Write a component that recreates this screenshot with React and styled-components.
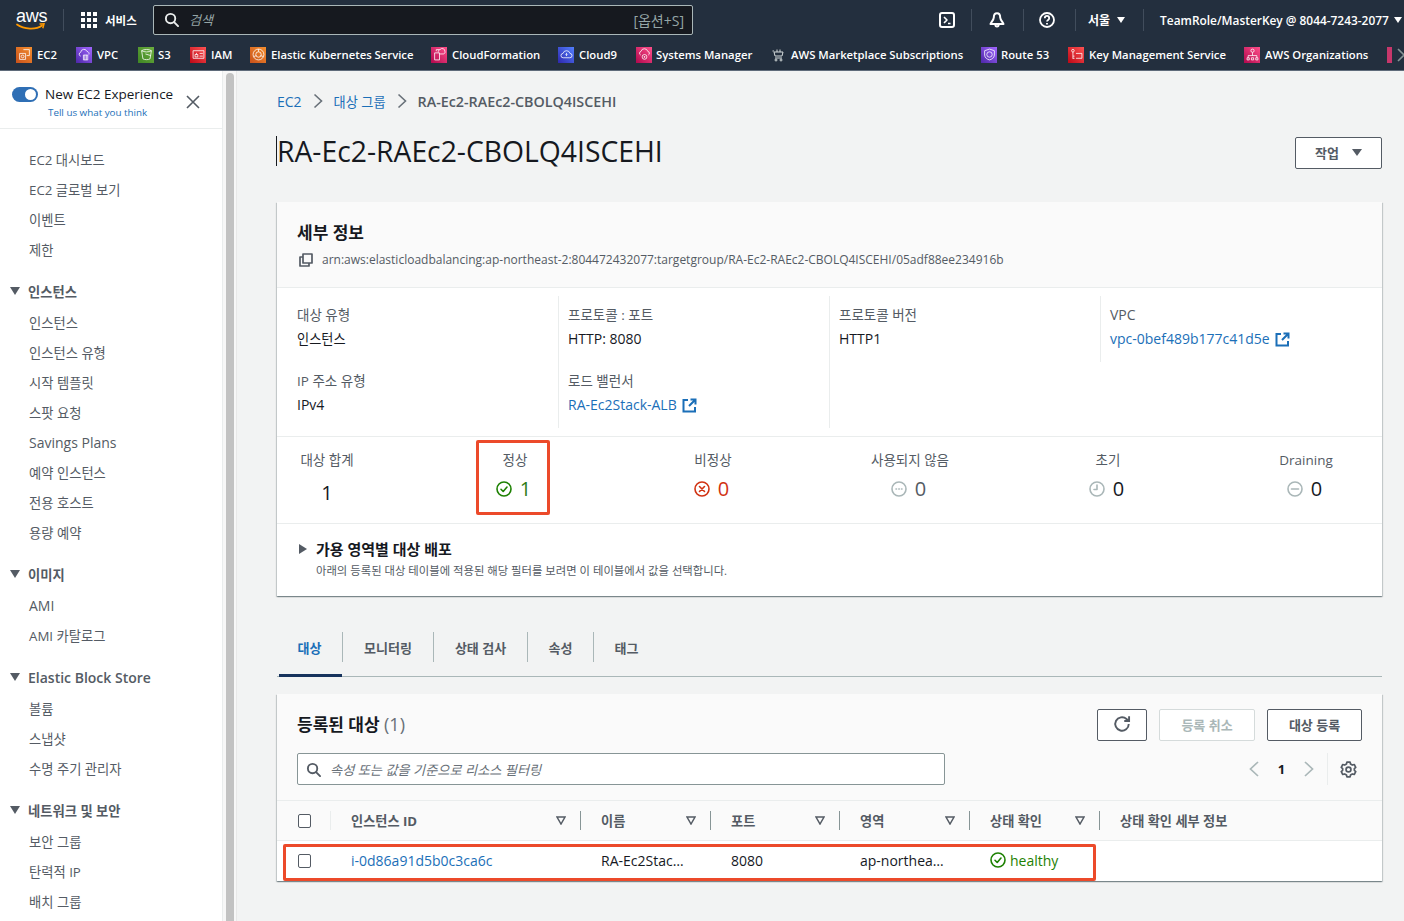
import React from "react";
import styled, { createGlobalStyle } from "styled-components";

const LINK = "#1b6fb8";

const GlobalStyle = createGlobalStyle`
  html, body {
    margin: 0;
    height: 921px;
    overflow: hidden;
    background: #f2f3f3;
    font-family: "Open Sans", "Noto Sans CJK KR", sans-serif;
    color: #16191f;
  }
  * { box-sizing: border-box; }
`;

const Page = styled.div`
  position: relative;
  width: 1404px;
  height: 921px;
  overflow: hidden;
`;

/* top navigation */
const TopBar = styled.div`
  display: flex;
  align-items: center;
  height: 39px;
  background: #232f3e;
  color: #fff;
`;
const LogoBox = styled.div`
  position: relative;
  width: 30px;
  height: 28px;
  margin-left: 16px;
  flex: none;
`;
const LogoText = styled.span`
  display: block;
  font-family: "Liberation Sans", sans-serif;
  font-size: 18px;
  line-height: 18px;
  letter-spacing: -0.3px;
  color: #fff;
  margin-top: 1px;
`;
const Smile = styled.svg`
  position: absolute;
  left: 0;
  top: 17px;
`;
const NavSep = styled.div`
  width: 1px;
  height: 22px;
  background: #414d5c;
  flex: none;
  margin: ${(p) => p.$margin || "0"};
`;
const ServicesLabel = styled.span`
  font-size: 11.5px;
  font-weight: 600;
  margin: 0 17px 0 8px;
  width: 31px;
  white-space: nowrap;
`;
const SearchBox = styled.div`
  display: flex;
  align-items: center;
  width: 540px;
  height: 30px;
  background: #16191f;
  border: 1px solid #aab7b8;
  border-radius: 2px;
  padding: 0 8px 0 10px;
  flex: none;
`;
const SearchHint = styled.span`
  font-size: 13px;
  font-style: italic;
  color: #95a5a6;
  margin-left: 10px;
  flex: 1;
`;
const SearchKey = styled.span`
  font-size: 14px;
  color: #95a5a6;
`;
const TopIcon = styled.div`
  display: flex;
  width: 16px;
  margin-left: ${(p) => p.$left || 0}px;
  flex: none;
`;
const Region = styled.span`
  margin-left: 12px;
  font-size: 12px;
  font-weight: 600;
  white-space: nowrap;
`;
const Account = styled.span`
  margin-left: 16px;
  font-size: 11.9px;
  font-weight: 600;
  white-space: nowrap;
`;
const Caret = styled.span`
  width: 0;
  height: 0;
  flex: none;
  border-left: ${(p) => p.$size || 4}px solid transparent;
  border-right: ${(p) => p.$size || 4}px solid transparent;
  border-top: ${(p) => (p.$size || 4) + 2}px solid ${(p) => p.$color || "#fff"};
  margin-left: ${(p) => p.$left || 0}px;
`;

const FavBar = styled.div`
  display: flex;
  align-items: center;
  height: 32px;
  background: #232f3e;
  border-bottom: 1px solid #5f6b7a;
  padding-left: 16px;
  color: #fff;
  overflow: hidden;
  white-space: nowrap;
`;
const FavItem = styled.div`
  display: flex;
  align-items: center;
  flex: none;
  gap: ${(p) => p.$gap || 5}px;
  width: ${(p) => p.$width}px;
  font-size: 11.3px;
  font-weight: 600;
`;
const FavIconBox = styled.span`
  display: flex;
  align-items: center;
  justify-content: center;
  width: 16px;
  height: 16px;
  flex: none;
  background: ${(p) => p.$bg};
`;
const FavEnd = styled.div`
  width: 5px;
  height: 16px;
  background: #c7376b;
  flex: none;
`;
const FavChevron = styled.svg`
  margin-left: 5px;
  flex: none;
`;

const Body = styled.div`
  display: flex;
  height: 850px;
`;

/* left navigation */
const Side = styled.aside`
  width: 223px;
  height: 100%;
  background: #fff;
  flex: none;
  border-right: 1px solid #eaeded;
`;
const Experience = styled.div`
  position: relative;
  height: 58px;
  border-bottom: 1px solid #eaeded;
`;
const ExperienceRow = styled.div`
  display: flex;
  align-items: center;
  padding: 14px 0 0 12px;
  font-size: 13.5px;
  line-height: 19px;
`;
const Toggle = styled.span`
  position: relative;
  display: block;
  width: 26px;
  height: 15px;
  border-radius: 8px;
  background: #2f6fb5;
  margin-right: 7px;
  flex: none;
  &::after {
    content: "";
    position: absolute;
    right: 2px;
    top: 2px;
    width: 11px;
    height: 11px;
    border-radius: 50%;
    background: #fff;
  }
`;
const ExperienceLink = styled.div`
  font-size: 9.8px;
  line-height: 14px;
  color: ${LINK};
  padding-left: 48px;
  margin-top: 2px;
`;
const CloseIcon = styled.svg`
  position: absolute;
  left: 186px;
  top: 24px;
`;
const SideNav = styled.nav`
  padding-top: 15px;
`;
const NavGroupTitle = styled.div`
  display: flex;
  align-items: center;
  height: 30px;
  margin-top: 12px;
  margin-bottom: 1px;
  padding-left: 10px;
  font-size: ${(p) => (p.$ko ? 13.3 : 14)}px;
  font-weight: 600;
  color: #545b64;
`;
const NavCaret = styled.span`
  width: 0;
  height: 0;
  border-left: 5px solid transparent;
  border-right: 5px solid transparent;
  border-top: 8px solid #545b64;
  margin-right: 8px;
`;
const NavItem = styled.div`
  display: flex;
  align-items: center;
  height: 30px;
  padding-left: 29px;
  font-size: ${(p) => (p.$ko ? 13.3 : 14)}px;
  color: #545b64;
`;

const ScrollTrack = styled.div`
  width: 14px;
  flex: none;
  background: #f7f7f7;
  border-right: 1px solid #e8e8e8;
  padding: 2px 2px 0 3px;
`;
const ScrollThumb = styled.div`
  height: 100%;
  border-radius: 5px 5px 0 0;
  background: #c2c2c2;
`;

/* main content */
const Main = styled.main`
  flex: 1;
  padding: 0 22px 0 40px;
  min-width: 0;
`;
const Crumbs = styled.div`
  display: flex;
  align-items: center;
  height: 20px;
  margin-top: 20px;
  font-size: 14px;
`;
const CrumbLink = styled.span`
  color: ${LINK};
  font-size: ${(p) => p.$size || 14}px;
`;
const CrumbCurrent = styled.span`
  color: #545b64;
  font-weight: 600;
  font-size: 14.3px;
`;
const CrumbSep = styled.svg`
  margin: 0 11px;
`;
const TitleRow = styled.div`
  display: flex;
  align-items: center;
  justify-content: space-between;
  margin-top: 18px;
  height: 48px;
`;
const PageTitle = styled.h1`
  margin: 0 0 4px -1px;
  border-left: 1px solid #16191f;
  height: 30px;
  display: flex;
  align-items: center;
  font-size: 28.3px;
  font-weight: 400;
  line-height: 30px;
  color: #16191f;
`;
const Button = styled.button`
  display: flex;
  align-items: center;
  justify-content: center;
  gap: ${(p) => p.$gap || 0}px;
  width: ${(p) => p.$width}px;
  height: 32px;
  flex: none;
  padding: 0 0 2px;
  background: #fff;
  border: 1px solid ${(p) => (p.$off ? "#d5dbdb" : "#545b64")};
  border-radius: 2px;
  color: ${(p) => (p.$off ? "#aab7b8" : "#545b64")};
  font-family: inherit;
  font-size: 13px;
  font-weight: 600;
`;

const Card = styled.section`
  background: #fff;
  box-shadow: 0 1px 1px 0 rgba(0, 28, 36, 0.3), 1px 1px 1px 0 rgba(0, 28, 36, 0.15), -1px 1px 1px 0 rgba(0, 28, 36, 0.15);
`;
const DetailsCard = styled(Card)`
  margin-top: 25px;
  height: 394px;
`;
const DetailsHead = styled.div`
  height: 86px;
  padding: 20px 20px 0;
  border-bottom: 1px solid #eaeded;
  background: #fafafa;
`;
const CardTitle = styled.h2`
  margin: 0;
  font-size: 17px;
  line-height: 22px;
  font-weight: 700;
`;
const ArnRow = styled.div`
  display: flex;
  align-items: center;
  gap: 9px;
  margin-top: 8px;
  padding-left: 2px;
  font-size: 12px;
  line-height: 16px;
  color: #545b64;
  white-space: nowrap;
`;
const AttrGrid = styled.div`
  display: grid;
  grid-template-columns: repeat(4, 271px);
  height: 149px;
  padding: 8px 0 9px 10px;
  border-bottom: 1px solid #eaeded;
`;
const AttrCol = styled.div`
  border-left: ${(p) => (p.$rule ? "1px solid #eaeded" : "0")};
  padding-left: ${(p) => (p.$rule ? 9 : 0)}px;
`;
const AttrBlock = styled.div`
  height: 66px;
  padding-top: 9px;
  padding-left: ${(p) => (p.$rule ? 9 : p.$flush ? 0 : 10)}px;
  border-left: ${(p) => (p.$rule ? "1px solid #eaeded" : "0")};
`;
const AttrLabel = styled.div`
  font-size: ${(p) => p.$size || 13.5}px;
  line-height: 20px;
  color: #545b64;
`;
const AttrValue = styled.div`
  display: flex;
  align-items: center;
  gap: 5px;
  margin-top: 4px;
  font-size: ${(p) => (p.$ko ? 13.2 : 14)}px;
  line-height: 20px;
  color: ${(p) => (p.$link ? LINK : "#16191f")};
`;
const Stats = styled.div`
  display: flex;
  height: 87px;
  border-bottom: 1px solid #eaeded;
`;
const Stat = styled.div`
  display: flex;
  flex-direction: column;
  align-items: center;
  width: ${(p) => p.$width}px;
  margin-left: ${(p) => p.$left}px;
  padding-top: 13px;
  flex: none;
`;
const StatLabel = styled.div`
  font-size: 13.5px;
  line-height: 20px;
  color: #545b64;
  white-space: nowrap;
`;
const StatValue = styled.div`
  display: flex;
  align-items: center;
  gap: 8px;
  margin-top: ${(p) => p.$top ?? 6}px;
  margin-right: ${(p) => (p.$top ? 0 : 3)}px;
  font-size: 20px;
  line-height: 26px;
  color: ${(p) => p.$color || "#16191f"};
`;
const Distribution = styled.div`
  padding: 13px 0 0 22px;
`;
const DistTitle = styled.div`
  display: flex;
  align-items: center;
  gap: 9px;
  font-size: 15px;
  font-weight: 700;
  line-height: 24px;
`;
const DistCaret = styled.span`
  width: 0;
  height: 0;
  border-top: 5px solid transparent;
  border-bottom: 5px solid transparent;
  border-left: 8px solid #545b64;
`;
const DistHint = styled.div`
  font-size: 11.35px;
  line-height: 16px;
  color: #545b64;
  padding-left: 17px;
  margin-top: 2px;
`;

const Tabs = styled.div`
  display: flex;
  align-items: flex-start;
  height: 48px;
  margin-top: 33px;
  padding-top: 3px;
  border-bottom: 1px solid #aab7b8;
`;
const Tab = styled.div`
  position: relative;
  display: flex;
  align-items: center;
  justify-content: center;
  height: 30px;
  width: ${(p) => p.$width}px;
  flex: none;
  font-size: 13px;
  font-weight: 600;
  color: ${(p) => (p.$active ? LINK : "#545b64")};
  border-right: 1px solid ${(p) => (p.$end ? "transparent" : "#aab7b8")};
  ${(p) => p.$active && `
    &::after {
      content: "";
      position: absolute;
      left: 2px;
      right: 0;
      bottom: -15px;
      height: 3px;
      background: #16325c;
    }
  `}
`;

const TableCard = styled(Card)`
  margin-top: 17px;
  height: 187px;
`;
const TableHead = styled.div`
  height: 107px;
  padding: 15px 20px 0;
  background: #fafafa;
  border-bottom: 1px solid #eaeded;
`;
const TableTitleRow = styled.div`
  display: flex;
  align-items: center;
  height: 32px;
`;
const TableTitle = styled.h2`
  margin: 0 0 4px;
  flex: 1;
  font-size: 17px;
  font-weight: 700;
`;
const TableCount = styled.span`
  font-weight: 400;
  font-size: 18px;
  color: #687078;
`;
const ButtonGroup = styled.div`
  display: flex;
  gap: 12px;
`;
const FilterRow = styled.div`
  display: flex;
  align-items: center;
  margin-top: 12px;
  height: 32px;
`;
const FilterBox = styled.div`
  display: flex;
  align-items: center;
  gap: 9px;
  width: 648px;
  height: 32px;
  padding-left: 8px;
  background: #fff;
  border: 1px solid #879596;
  border-radius: 2px;
  font-size: 13.2px;
  font-style: italic;
  color: #687078;
`;
const Pager = styled.div`
  display: flex;
  align-items: center;
  margin-left: auto;
  padding-right: 5px;
`;
const PageNumber = styled.span`
  width: 43px;
  text-align: center;
  font-size: 13px;
  font-weight: 700;
`;
const PagerSep = styled.div`
  width: 1px;
  height: 32px;
  background: #eaeded;
  margin: 0 12px;
`;

const Row = styled.div`
  display: grid;
  grid-template-columns: 54px 250px 130px 129px 130px 130px 1fr;
  align-items: center;
  height: ${(p) => p.$height}px;
  background: ${(p) => p.$bg || "#fff"};
  border-bottom: ${(p) => (p.$line ? "1px solid #eaeded" : "0")};
`;
const CheckCell = styled.div`
  display: flex;
  align-items: center;
  height: 19px;
  padding-left: 21px;
  border-right: 1px solid ${(p) => p.$sep || "transparent"};
`;
const CheckBox = styled.span`
  display: block;
  width: 13px;
  height: 14px;
  background: #fff;
  border: 1px solid #545b64;
  border-radius: 2px;
`;
const HeadCell = styled.div`
  display: flex;
  align-items: center;
  justify-content: space-between;
  height: 19px;
  padding: 0 14px 0 20px;
  font-size: 13.2px;
  font-weight: 700;
  color: #545b64;
  white-space: nowrap;
  border-right: 1px solid ${(p) => (p.$last ? "transparent" : "#879596")};
`;
const DataCell = styled.div`
  display: flex;
  align-items: center;
  gap: 4px;
  padding: 0 20px 2px;
  font-size: 14px;
  color: ${(p) => p.$color || "#16191f"};
  white-space: nowrap;
`;

/* annotation boxes drawn over the screenshot */
const Highlight = styled.div`
  position: absolute;
  left: ${(p) => p.$x}px;
  top: ${(p) => p.$y}px;
  width: ${(p) => p.$w}px;
  height: ${(p) => p.$h}px;
  border: 3px solid #ec4a2a;
  border-radius: 2px;
  pointer-events: none;
`;

/* icons */
const Status = ({ color, children, size = 16 }) => (
  <svg width={size} height={size} viewBox="0 0 16 16" fill="none" stroke={color} strokeWidth="1.6" strokeLinecap="round" strokeLinejoin="round">
    <circle cx="8" cy="8" r="7" />
    {children}
  </svg>
);

const FavIcon = ({ bg, d }) => (
  <FavIconBox $bg={bg}>
    <svg width="13" height="13" viewBox="0 0 12 12" fill="none" stroke="#fff" strokeOpacity="0.85" strokeWidth="0.85">
      <path d={d} />
    </svg>
  </FavIconBox>
);

const Chevron = ({ left, color = "#687078" }) => (
  <svg width="12" height="18" viewBox="0 0 12 18" fill="none" stroke={color} strokeWidth="1.7">
    <path d={left ? "M10 2 2.500 9l7.500 7" : "M2 2l7.500 7L2 16"} />
  </svg>
);

const FilterArrow = () => (
  <svg width="10" height="9" viewBox="0 0 10 9" fill="none" stroke="#545b64" strokeWidth="1.5" style={{ flex: "none" }}>
    <path d="M1 1h8L5 8z" />
  </svg>
);

const Ext = () => (
  <svg width="15" height="15" viewBox="0 0 15 15" fill="none" stroke={LINK} strokeWidth="2">
    <path d="M6 2H1.500v11.500H13V9M8.500 1.500h5v5M13.500 1.500 7 8" />
  </svg>
);

const favorites = [
  { name: "EC2", width: 60, bg: "linear-gradient(45deg,#c8511b,#f58f2e)", d: "M5 1.500h5.500V7H8M1.500 5H7v5.500H1.500zM4.300 6.500a1.300 1.300 0 1 0 0 2.600 1.300 1.300 0 0 0 0-2.600z" },
  { name: "VPC", width: 62, bg: "linear-gradient(45deg,#4d27a8,#a166ff)", d: "M2.500 7.500a1.800 1.800 0 0 1 0-3.500 3 3 0 0 1 5.800-.8 2 2 0 0 1 1.700 2.800M5 6.500h4v4.500H5zM6.300 6.500v4.500M7.700 6.500v4.500" },
  { name: "S3", width: 52, gap: 4, bg: "linear-gradient(45deg,#3f8624,#6cae3e)", d: "M1.500 2.500c2-1.500 7-1.500 9 0l-1.200 7.500c-1.500 1-5 1-6.600 0zM1.500 2.500c2 1.500 7 1.500 9 0M5 5.500l5 1.500" },
  { name: "IAM", width: 60, bg: "linear-gradient(45deg,#bd0816,#ff5252)", d: "M1 2.500h10v7H1zM2.800 6h2.600v2.200H2.800zM4.100 4.500V6M7 5h3M7 7.500h3" },
  { name: "Elastic Kubernetes Service", width: 181, bg: "linear-gradient(45deg,#c8511b,#f58f2e)", d: "M6 1a5 5 0 1 0 0 10A5 5 0 0 0 6 1zM6 3.500a2.500 2.500 0 1 0 0 5 2.500 2.500 0 0 0 0-5zM6 1v2.500M1.500 8 4 7M10.500 8 8 7" },
  { name: "CloudFormation", width: 127, bg: "linear-gradient(45deg,#b0084d,#ff4f8b)", d: "M1.500 4.500h4.500v6.500H1.500zM3 3V1.500h3M5 4a1.800 1.800 0 0 1 1.500-2.500 2.500 2.500 0 0 1 4.500 1.500c.5 1.500-.5 2.500-1.500 2.500H6" },
  { name: "Cloud9", width: 78, bg: "linear-gradient(45deg,#2e27ad,#527fff)", d: "M3 9a2 2 0 0 1-.2-4 3.300 3.300 0 0 1 6.400 0A2 2 0 0 1 9 9zM6 4.500V7M5 6l1 1 1-1" },
  { name: "Systems Manager", width: 136, gap: 4, bg: "linear-gradient(45deg,#b0084d,#ff4f8b)", d: "M2.500 6.500a1.800 1.800 0 0 1 .3-3.400 3.200 3.200 0 0 1 6.200 0 1.800 1.800 0 0 1 .5 3.400M6 6a2.200 2.200 0 1 0 0 4.400A2.200 2.200 0 0 0 6 6zM6 7.500v1.400M5.300 8.200h1.400" },
  { name: "AWS Marketplace Subscriptions", width: 209, market: true },
  { name: "Route 53", width: 87, gap: 4, bg: "linear-gradient(45deg,#4d27a8,#a166ff)", d: "M6 1l4.500 1.500v4C10.500 9 8 10.500 6 11 4 10.500 1.500 9 1.500 6.500v-4zM6 3.500a2.500 2.500 0 1 0 0 5 2.500 2.500 0 0 0 0-5z" },
  { name: "Key Management Service", width: 176, bg: "linear-gradient(45deg,#bd0816,#ff5252)", d: "M1.500 2.500a1.200 1.200 0 1 0 2.400 0 1.200 1.200 0 0 0-2.400 0zM2.700 3.700v6.300M2.700 7.500h1.500M2.700 9.500h1.500M5.500 5h5.500v4.500H5.500" },
  { name: "AWS Organizations", width: 143, bg: "linear-gradient(45deg,#b0084d,#ff4f8b)", d: "M6 1a1.500 1.500 0 1 0 0 3 1.500 1.500 0 0 0 0-3zM6 4v3M2 9V7h8v2M1 9h2v2H1zM5 9h2v2H5zM9 9h2v2H9z" },
];

const navGroups = [
  { items: ["EC2 대시보드", "EC2 글로벌 보기", "이벤트", "제한"] },
  { title: "인스턴스", items: ["인스턴스", "인스턴스 유형", "시작 템플릿", "스팟 요청", "Savings Plans", "예약 인스턴스", "전용 호스트", "용량 예약"] },
  { title: "이미지", items: ["AMI", "AMI 카탈로그"] },
  { title: "Elastic Block Store", items: ["볼륨", "스냅샷", "수명 주기 관리자"] },
  { title: "네트워크 및 보안", items: ["보안 그룹", "탄력적 IP", "배치 그룹"] },
];

const hasHangul = (text) => /[가-힣]/.test(text);

const SearchGlyph = ({ color, size = 16 }) => (
  <svg width={size} height={size} viewBox="0 0 16 16" fill="none" stroke={color} strokeWidth="2" strokeLinecap="round">
    <circle cx="7" cy="7" r="5" />
    <path d="m11 11 4 4" />
  </svg>
);

const CrumbChevron = () => (
  <CrumbSep width="10" height="16" viewBox="0 0 10 16" fill="none" stroke="#687078" strokeWidth="1.600">
    <path d="m1.500 1.500 7 6.500-7 6.500" />
  </CrumbSep>
);

export default function App() {
  return (
    <Page>
      <GlobalStyle />
      <TopBar>
        <LogoBox>
          <LogoText>aws</LogoText>
          <Smile width="30" height="9" viewBox="0 0 30 9" fill="none">
            <path d="M1 1.500c7 5 19 5.500 25 1" stroke="#ff9900" strokeWidth="1.700" strokeLinecap="round" />
            <path d="M23.500 1 28 .8l-1.200 4.400" stroke="#ff9900" strokeWidth="1.500" />
          </Smile>
        </LogoBox>
        <NavSep $margin="0 17px" />
        <svg width="16" height="16" viewBox="0 0 16 16" fill="#fff" style={{ flex: "none" }}>
          <path d="M0 0h4v4H0zM6 0h4v4H6zM12 0h4v4h-4zM0 6h4v4H0zM6 6h4v4H6zM12 6h4v4h-4zM0 12h4v4H0zM6 12h4v4H6zM12 12h4v4h-4z" />
        </svg>
        <ServicesLabel>서비스</ServicesLabel>
        <SearchBox>
          <SearchGlyph color="#eaeded" size={15} />
          <SearchHint>검색</SearchHint>
          <SearchKey>[옵션+S]</SearchKey>
        </SearchBox>
        <TopIcon $left={246}>
          <svg width="16" height="16" viewBox="0 0 16 16" fill="none" stroke="#fff" strokeWidth="2" strokeLinejoin="round">
            <rect x="1" y="1" width="14" height="14" rx="2" />
            <path d="m5 5 3 3-3 3M9 11.500h2.500" strokeWidth="1.600" />
          </svg>
        </TopIcon>
        <NavSep $margin="0 0 0 16px" />
        <TopIcon $left={17}>
          <svg width="16" height="16" viewBox="0 0 16 16" fill="none" stroke="#fff" strokeWidth="2" strokeLinejoin="round">
            <path d="M8 1.200c-2.300 0-3.200 2.200-3.200 4.300 0 2.500-3.300 5.300-3.300 6.500h13c0-1.200-3.300-4-3.300-6.500 0-2.100-.9-4.300-3.200-4.300zM6.300 12c0 3.400 3.400 3.400 3.400 0" />
          </svg>
        </TopIcon>
        <NavSep $margin="0 0 0 18px" />
        <TopIcon $left={15}>
          <svg width="16" height="16" viewBox="0 0 16 16" fill="none" stroke="#fff" strokeWidth="1.800">
            <circle cx="8" cy="8" r="7" />
            <path d="M5.800 6.200c0-3 4.400-3 4.400 0 0 1.800-2.200 1.700-2.200 3.400M8 11v1.500" />
          </svg>
        </TopIcon>
        <NavSep $margin="0 0 0 20px" />
        <Region>서울</Region>
        <Caret $left={7} />
        <NavSep $margin="0 0 0 18px" />
        <Account>TeamRole/MasterKey @ 8044-7243-2077</Account>
        <Caret $left={5} />
      </TopBar>

      <FavBar>
        {favorites.map((f) => (
          <FavItem key={f.name} $width={f.width} $gap={f.market ? 7 : f.gap}>
            {f.market ? (
              <svg width="12" height="14" viewBox="0 0 12 14" fill="none" stroke="#d5dbdb" strokeWidth="1" style={{ flex: "none" }}>
                <path d="M2 4h9l-1 4H3L2 4zM.5 3H2M3 10h7M5 4V1.500M8 4V1.500" />
                <circle cx="4" cy="12" r="1" />
                <circle cx="9" cy="12" r="1" />
              </svg>
            ) : (
              <FavIcon bg={f.bg} d={f.d} />
            )}
            {f.name}
          </FavItem>
        ))}
        <FavEnd />
        <FavChevron width="8" height="16" viewBox="0 0 8 16" fill="none" stroke="#879596" strokeWidth="1.600">
          <path d="m1 2 6 6-6 6" />
        </FavChevron>
      </FavBar>

      <Body>
        <Side>
          <Experience>
            <ExperienceRow>
              <Toggle />
              New EC2 Experience
            </ExperienceRow>
            <ExperienceLink>Tell us what you think</ExperienceLink>
            <CloseIcon width="14" height="14" viewBox="0 0 14 14" fill="none" stroke="#545b64" strokeWidth="1.600">
              <path d="m1 1 12 12M13 1 1 13" />
            </CloseIcon>
          </Experience>
          <SideNav>
            {navGroups.map((g) => (
              <div key={g.items[0]}>
                {g.title && (
                  <NavGroupTitle $ko={hasHangul(g.title)}>
                    <NavCaret />
                    {g.title}
                  </NavGroupTitle>
                )}
                {g.items.map((item) => (
                  <NavItem key={item} $ko={hasHangul(item)}>{item}</NavItem>
                ))}
              </div>
            ))}
          </SideNav>
        </Side>
        <ScrollTrack>
          <ScrollThumb />
        </ScrollTrack>

        <Main>
          <Crumbs>
            <CrumbLink>EC2</CrumbLink>
            <CrumbChevron />
            <CrumbLink $size={13.2}>대상 그룹</CrumbLink>
            <CrumbChevron />
            <CrumbCurrent>RA-Ec2-RAEc2-CBOLQ4ISCEHI</CrumbCurrent>
          </Crumbs>
          <TitleRow>
            <PageTitle>RA-Ec2-RAEc2-CBOLQ4ISCEHI</PageTitle>
            <Button $width={87} $gap={13}>
              작업
              <Caret $size={5} $color="#545b64" />
            </Button>
          </TitleRow>

          <DetailsCard>
            <DetailsHead>
              <CardTitle>세부 정보</CardTitle>
              <ArnRow>
                <svg width="14" height="14" viewBox="0 0 14 14" fill="none" stroke="#545b64" strokeWidth="1.700" strokeLinejoin="round">
                  <path d="M4 1h9v9H4zM4 4H1v9h9v-3" />
                </svg>
                arn:aws:elasticloadbalancing:ap-northeast-2:804472432077:targetgroup/RA-Ec2-RAEc2-CBOLQ4ISCEHI/05adf88ee234916b
              </ArnRow>
            </DetailsHead>
            <AttrGrid>
              <AttrCol>
                <AttrBlock>
                  <AttrLabel>대상 유형</AttrLabel>
                  <AttrValue $ko>인스턴스</AttrValue>
                </AttrBlock>
                <AttrBlock>
                  <AttrLabel>IP 주소 유형</AttrLabel>
                  <AttrValue>IPv4</AttrValue>
                </AttrBlock>
              </AttrCol>
              <AttrCol $rule>
                <AttrBlock $flush>
                  <AttrLabel>프로토콜 : 포트</AttrLabel>
                  <AttrValue>HTTP: 8080</AttrValue>
                </AttrBlock>
                <AttrBlock $flush>
                  <AttrLabel>로드 밸런서</AttrLabel>
                  <AttrValue $link>RA-Ec2Stack-ALB <Ext /></AttrValue>
                </AttrBlock>
              </AttrCol>
              <AttrCol $rule>
                <AttrBlock $flush>
                  <AttrLabel>프로토콜 버전</AttrLabel>
                  <AttrValue>HTTP1</AttrValue>
                </AttrBlock>
              </AttrCol>
              <AttrCol>
                <AttrBlock $rule>
                  <AttrLabel $size={14}>VPC</AttrLabel>
                  <AttrValue $link>vpc-0bef489b177c41d5e <Ext /></AttrValue>
                </AttrBlock>
              </AttrCol>
            </AttrGrid>
            <Stats>
              <Stat $left={24} $width={52}>
                <StatLabel>대상 합계</StatLabel>
                <StatValue $top={10}>1</StatValue>
              </Stat>
              <Stat $left={137} $width={50}>
                <StatLabel>정상</StatLabel>
                <StatValue $color="#2e7d16">
                  <Status color="#1d8102"><path d="m5 8.300 2.200 2.200L11 6" /></Status>
                  1
                </StatValue>
              </Stat>
              <Stat $left={148} $width={50}>
                <StatLabel>비정상</StatLabel>
                <StatValue $color="#d13212">
                  <Status color="#d13212"><path d="m5.500 5.500 5 5M10.500 5.500l-5 5" /></Status>
                  0
                </StatValue>
              </Stat>
              <Stat $left={133} $width={78}>
                <StatLabel>사용되지 않음</StatLabel>
                <StatValue $color="#545b64">
                  <Status color="#aab7b8"><path d="M5 8h.5M7.800 8h.5M10.500 8h.5" /></Status>
                  0
                </StatValue>
              </Stat>
              <Stat $left={134} $width={50}>
                <StatLabel>초기</StatLabel>
                <StatValue>
                  <Status color="#aab7b8"><path d="M8 4v4.500H5" /></Status>
                  0
                </StatValue>
              </Stat>
              <Stat $left={146} $width={54}>
                <StatLabel>Draining</StatLabel>
                <StatValue>
                  <Status color="#aab7b8"><path d="M4.500 8h7" /></Status>
                  0
                </StatValue>
              </Stat>
            </Stats>
            <Distribution>
              <DistTitle><DistCaret />가용 영역별 대상 배포</DistTitle>
              <DistHint>아래의 등록된 대상 테이블에 적용된 해당 필터를 보려면 이 테이블에서 값을 선택합니다.</DistHint>
            </Distribution>
          </DetailsCard>

          <Tabs>
            <Tab $width={66} $active>대상</Tab>
            <Tab $width={91}>모니터링</Tab>
            <Tab $width={94}>상태 검사</Tab>
            <Tab $width={66}>속성</Tab>
            <Tab $width={66} $end>태그</Tab>
          </Tabs>

          <TableCard>
            <TableHead>
              <TableTitleRow>
                <TableTitle>등록된 대상 <TableCount>(1)</TableCount></TableTitle>
                <ButtonGroup>
                  <Button $width={50}>
                    <svg width="18" height="18" viewBox="0 0 16 16" fill="none" stroke="#545b64" strokeWidth="1.700">
                      <path d="M14 8a6 6 0 1 1-2-4.500L14 5M14.300 1v4.300H10" />
                    </svg>
                  </Button>
                  <Button $width={96} $off>등록 취소</Button>
                  <Button $width={95}>대상 등록</Button>
                </ButtonGroup>
              </TableTitleRow>
              <FilterRow>
                <FilterBox>
                  <SearchGlyph color="#545b64" size={15} />
                  속성 또는 값을 기준으로 리소스 필터링
                </FilterBox>
                <Pager>
                  <Chevron left color="#aab7b8" />
                  <PageNumber>1</PageNumber>
                  <Chevron color="#aab7b8" />
                  <PagerSep />
                  <svg width="17" height="17" viewBox="0 0 16 16" fill="none" stroke="#545b64" strokeWidth="1.600" strokeLinejoin="round">
                    <circle cx="8" cy="8" r="2.300" />
                    <path d="m6.500 1-.4 1.800-1.700 1-1.800-.5L1.200 6l1.300 1.200v1.600L1.200 10l1.400 2.700 1.800-.5 1.700 1 .4 1.800h3l.4-1.800 1.700-1 1.800.5 1.400-2.700-1.300-1.200V7.200L14.800 6l-1.400-2.700-1.800.5-1.700-1L9.500 1z" />
                  </svg>
                </Pager>
              </FilterRow>
            </TableHead>
            <Row $height={40} $bg="#fafafa" $line>
              <CheckCell $sep="#eaeded"><CheckBox /></CheckCell>
              <HeadCell>인스턴스 ID <FilterArrow /></HeadCell>
              <HeadCell>이름 <FilterArrow /></HeadCell>
              <HeadCell>포트 <FilterArrow /></HeadCell>
              <HeadCell>영역 <FilterArrow /></HeadCell>
              <HeadCell>상태 확인 <FilterArrow /></HeadCell>
              <HeadCell $last>상태 확인 세부 정보</HeadCell>
            </Row>
            <Row $height={40}>
              <CheckCell><CheckBox /></CheckCell>
              <DataCell $color={LINK}>i-0d86a91d5b0c3ca6c</DataCell>
              <DataCell>RA-Ec2Stac…</DataCell>
              <DataCell>8080</DataCell>
              <DataCell>ap-northea…</DataCell>
              <DataCell $color="#1d8102">
                <Status color="#1d8102"><path d="m5 8.300 2.200 2.200L11 6" /></Status>
                healthy
              </DataCell>
              <DataCell />
            </Row>
          </TableCard>
        </Main>
      </Body>

      <Highlight $x={476} $y={440} $w={74} $h={75} />
      <Highlight $x={283} $y={844} $w={813} $h={37} />
    </Page>
  );
}
